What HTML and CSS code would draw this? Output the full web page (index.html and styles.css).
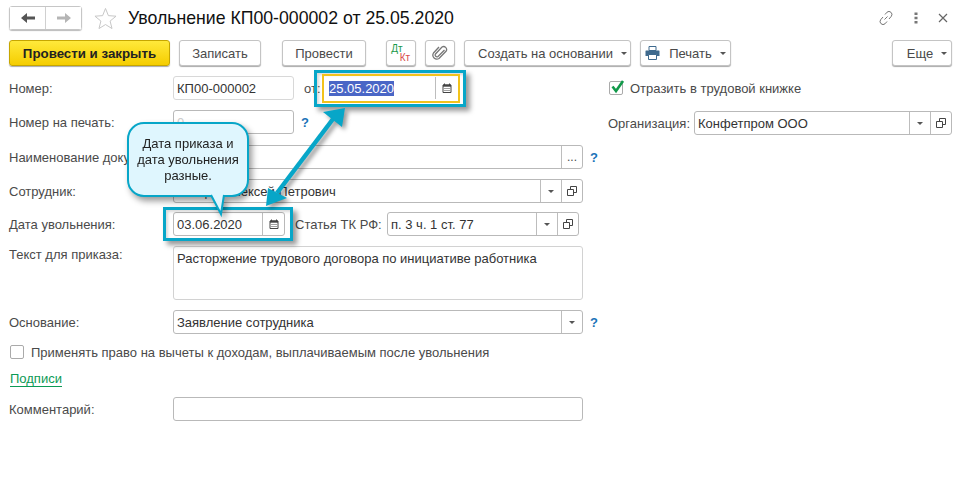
FILE: index.html
```html
<!DOCTYPE html>
<html lang="ru">
<head>
<meta charset="utf-8">
<title>Увольнение КП00-000002</title>
<link rel="stylesheet" href="styles.css">
</head>
<body>
<svg class="defs" width="0" height="0">
  <defs>
    <symbol id="cal" viewBox="0 0 10 10"><path d="M1 2h8v7.500H1z M2.500 .5v2 M7.500 .5v2" fill="none" stroke="#444" stroke-width="1"/><path d="M1 1.500h8v2.200H1z" fill="#444"/><path d="M2.500 5h1v1h-1zM4.500 5h1v1h-1zM6.500 5h1v1h-1zM2.500 7h1v1h-1zM4.500 7h1v1h-1zM6.500 7h1v1h-1z" fill="#444"/></symbol>
    <symbol id="open" viewBox="0 0 10 10"><path d="M3.500 3V.5h6v6H7M.5 3.500h6v6h-6z" fill="none" stroke="#444" stroke-width="1"/></symbol>
  </defs>
</svg>
<div class="page">
  <header class="head">
    <div class="nav">
      <button class="nav-btn"><svg width="16" height="12" viewBox="0 0 16 12"><path d="M1 6l6-5v3.500h8v3H7V11z" fill="#555"/></svg></button>
      <button class="nav-btn"><svg width="16" height="12" viewBox="0 0 16 12"><path d="M15 6L9 1v3.500H1v3h8V11z" fill="#b5b5b5"/></svg></button>
    </div>
    <svg class="star" width="23" height="23" viewBox="0 0 24 24"><path d="M12 1.500l3 7.500 8 .6-6.200 5.100 2 7.800L12 18.300l-6.800 4.200 2-7.800L1 9.600 9 9z" fill="#fff" stroke="#c4c4c4"/></svg>
    <h1 class="title">Увольнение КП00-000002 от 25.05.2020</h1>
    <div class="win-icons">
      <svg width="16" height="16" viewBox="0 0 16 16"><path d="M6.500 9.500l3-3M7 4.500l2-2.300a3 3 0 0 1 4.400 4L11 9M9 11.500l-2 2.300a3 3 0 0 1-4.400-4L5 7" fill="none" stroke="#777" stroke-width="1"/></svg>
      <svg width="4" height="12" viewBox="0 0 4 12"><path d="M.5 .5h3v2.500h-3zM.5 4.800h3v2.500h-3zM.5 9h3v2.500h-3z" fill="#777"/></svg>
      <svg width="10" height="10" viewBox="0 0 10 10"><path d="M1 1l8 8M9 1l-8 8" stroke="#666" stroke-width="1.200"/></svg>
    </div>
  </header>

  <div class="toolbar">
    <button class="btn primary w161">Провести и закрыть</button>
    <button class="btn w82">Записать</button>
    <button class="btn w84 gap-l">Провести</button>
    <button class="btn w30 gap-m dtkt"><span class="dt">Дт</span><span class="kt">Кт</span></button>
    <button class="btn w30"><svg width="16" height="16" viewBox="0 0 16 16"><path d="M12.500 5L6 11.500a1.800 1.800 0 0 1-2.500-2.500l6.500-7a3 3 0 0 1 4.200 4L7 13.500a4 4 0 0 1-5.500-5.500L7 2" fill="none" stroke="#777" stroke-width="1.300"/></svg></button>
    <button class="btn w167 shifted">Создать на основании<i class="caret"></i></button>
    <button class="btn w91"><svg class="printer" width="15" height="14" viewBox="0 0 15 14"><path d="M4 .5h7v4H4z" fill="#fff" stroke="#3f6a8e"/><path d="M1 4.500h13a.5.500 0 0 1 .5.500v5H.5V5a.5.500 0 0 1 .5-.500z" fill="#3f6a8e"/><path d="M3.500 8.500h8v5h-8z" fill="#fff" stroke="#3f6a8e"/></svg>Печать<i class="caret"></i></button>
    <button class="btn w60 push shifted">Еще<i class="caret"></i></button>
  </div>

  <main class="form">
    <div class="main-col">
      <div class="row r1">
        <label class="lbl">Номер:</label>
        <div class="field w121 soft"><span class="val">КП00-000002</span></div>
        <span class="lbl-in ot">от:</span>
        <div class="field w137 nob"><span class="val sel">25.05.2020</span><span class="fb cal"><svg width="10" height="10"><use href="#cal"/></svg></span></div>
      </div>
      <div class="row r2">
        <label class="lbl">Номер на печать:</label>
        <div class="field w121"><span class="val ph">0</span></div>
        <a class="q">?</a>
      </div>
      <div class="row r3">
        <label class="lbl">Наименование документа:</label>
        <div class="field w410"><span class="val"></span><span class="fb">...</span></div>
        <a class="q">?</a>
      </div>
      <div class="row r4">
        <label class="lbl">Сотрудник:</label>
        <div class="field w410"><span class="val">Зайцев Алексей Петрович</span><span class="fb"><i class="caret"></i></span><span class="fb"><svg width="10" height="10"><use href="#open"/></svg></span></div>
      </div>
      <div class="row r5">
        <label class="lbl">Дата увольнения:</label>
        <div class="field w112"><span class="val">03.06.2020</span><span class="fb cal"><svg width="10" height="10"><use href="#cal"/></svg></span></div>
        <span class="lbl-in st">Статья ТК РФ:</span>
        <div class="field w192"><span class="val">п. 3 ч. 1 ст. 77</span><span class="fb"><i class="caret"></i></span><span class="fb"><svg width="10" height="10"><use href="#open"/></svg></span></div>
      </div>
      <div class="row r6">
        <label class="lbl">Текст для приказа:</label>
        <div class="field w410 area"><span class="val">Расторжение трудового договора по инициативе работника</span></div>
      </div>
      <div class="row r7">
        <label class="lbl">Основание:</label>
        <div class="field w410"><span class="val">Заявление сотрудника</span><span class="fb"><i class="caret"></i></span></div>
        <a class="q">?</a>
      </div>
      <div class="check-row"><i class="box"></i><span class="lbl-in">Применять право на вычеты к доходам, выплачиваемым после увольнения</span></div>
      <a class="link">Подписи</a>
      <div class="row r8">
        <label class="lbl">Комментарий:</label>
        <div class="field w410"></div>
      </div>
    </div>
    <aside class="side-col">
      <div class="side-check"><i class="box on"><svg width="15" height="14" viewBox="0 0 15 14"><path d="M2.500 6.500l3.500 4.500L13 1" fill="none" stroke="#12994a" stroke-width="2.600"/></svg></i><span class="lbl-in">Отразить в трудовой книжке</span></div>
      <div class="side-org">
        <label class="lbl-in">Организация:</label>
        <div class="field w258"><span class="val">Конфетпром ООО</span><span class="fb"><i class="caret"></i></span><span class="fb"><svg width="10" height="10"><use href="#open"/></svg></span></div>
      </div>
    </aside>
  </main>

  <div class="frame f1"><div class="inner"></div></div>
  <div class="frame f2"></div>
  <svg class="arrow" width="100" height="115" viewBox="0 0 100 115"><path d="M22 93L78 19" stroke="#07a6c8" stroke-width="4.500"/><path d="M90 8L68 12 87 27zM11 106L13 88 32 98z" fill="#07a6c8"/></svg>
  <div class="callout">
    <svg class="tail" width="24" height="22" viewBox="0 0 24 22"><path d="M2 0L12 19 15 0" fill="#dff6fe" stroke="#07a6c8" stroke-width="2"/><path d="M4 0h10v-3H4z" fill="#dff6fe"/></svg>
    <p>Дата приказа и дата увольнения разные.</p>
  </div>
</div>
</body>
</html>
```
FILE: styles.css
```css
* { box-sizing: border-box; }
html, body { margin: 0; padding: 0; background: #fff; }
body { font-family: "Liberation Sans", Arial, sans-serif; font-size: 13px; color: #4a4a4a; }
.defs { position: absolute; }
.page { position: relative; width: 963px; height: 479px; overflow: hidden; padding: 6px 11px 0 9px; }

.head { display: flex; align-items: center; height: 24px; }
.nav { display: flex; width: 73px; height: 24px; border: 1px solid #c6c6c6; border-radius: 3px; box-shadow: 0 1px 1px #bbb; }
.nav-btn { flex: 1; border: 0; background: #fff; padding: 0; display: flex; align-items: center; justify-content: center; }
.nav-btn + .nav-btn { border-left: 1px solid #d0d0d0; }
.star { margin-left: 12px; }
.title { margin: 0 0 0 11px; font-size: 17.700px; font-weight: 400; color: #111; line-height: 24px; white-space: nowrap; }
.win-icons { margin-left: auto; margin-right: 4px; display: flex; align-items: center; gap: 20px; }

.toolbar { display: flex; margin-top: 10px; gap: 9px; height: 26px; }
.btn { font: inherit; font-size: 13px; color: #4a4a4a; height: 26px; padding: 0; background: #fff; border: 1px solid #c4c4c4; border-radius: 3px; box-shadow: 0 1px 1px #aaa; display: flex; align-items: center; justify-content: center; white-space: nowrap; }
.shifted { padding-left: 10px; }
.primary { background: linear-gradient(#ffe93b, #f5cd00); border-color: #c6a600; color: #222; font-weight: 700; font-size: 13.300px; }
.w161 { width: 161px; } .w82 { width: 82px; } .w84 { width: 84px; } .w30 { width: 30px; }
.w167 { width: 167px; } .w91 { width: 91px; } .w60 { width: 60px; }
.gap-l { margin-left: 12px; } .gap-m { margin-left: 11px; }
.push { margin-left: auto; }
.caret { display: inline-block; margin-left: 8px; width: 0; height: 0; border: 3px solid transparent; border-top: 3px solid #555; border-bottom: 0; }
.printer { margin-right: 9px; }
.dtkt { flex-direction: column; font-size: 10px; line-height: 9px; }
.dt { color: #1a9a4b; margin-right: 8px; }
.kt { color: #d84b4b; margin-left: 8px; }

.form { display: flex; margin-top: 10px; }
.main-col { width: 599px; flex: none; }
.row { display: flex; align-items: center; height: 24px; }
.r2 { margin-top: 10px; } .r3 { margin-top: 11px; } .r4 { margin-top: 10px; } .r5 { margin-top: 9px; }
.r6 { margin-top: 10px; height: 54px; align-items: flex-start; } .r7 { margin-top: 10px; } .r8 { margin-top: 10px; }
.lbl { width: 164px; flex: none; font-size: 13px; white-space: nowrap; }
.r6 .lbl { margin-top: 1px; }
.lbl-in { font-size: 13px; white-space: nowrap; }
.ot { margin-left: 10px; width: 19px; }
.st { margin-left: 10px; width: 92px; }
.field { height: 24px; display: flex; align-items: center; background: #fff; border: 1px solid #b9b9b9; border-radius: 3px; flex: none; }
.soft { border-color: #d8d8d8; }
.nob { border-color: transparent; }
.area { height: 54px; align-items: flex-start; border-color: #d2d2d2; padding-top: 4px; }
.w121 { width: 121px; } .w137 { width: 137px; } .w410 { width: 410px; } .w112 { width: 112px; } .w192 { width: 192px; } .w258 { width: 258px; }
.val { flex: 1; padding-left: 3px; font-size: 13px; color: #333; white-space: nowrap; overflow: hidden; }
.sel { flex: none; width: 65px; padding: 0; margin-left: 5px; margin-right: 41px; background: #4a66c6; color: #fff; }
.ph { color: #ccc; }
.fb { flex: none; width: 21px; height: 22px; border-left: 1px solid #bdbdbd; display: flex; align-items: center; justify-content: center; font-size: 12px; line-height: 18px; }
.fb.cal { width: 22px; }
.fb .caret { margin-left: 0; }
.q { margin-left: 7px; color: #1b73b8; font-weight: 700; font-size: 13px; }

.check-row { display: flex; align-items: center; gap: 7px; height: 16px; margin-top: 10px; margin-left: 1px; }
.box { display: block; width: 14px; height: 14px; border: 1px solid #aaa; border-radius: 2px; flex: none; position: relative; }
.on svg { position: absolute; left: 0; top: -2px; }
.link { display: table; margin-top: 12px; color: #0c9a55; font-size: 13px; line-height: 14px; border-bottom: 1px solid #0c9a55; margin-left: 1px; }

.side-col { flex: 1; }
.side-check { display: flex; align-items: center; gap: 7px; height: 24px; margin-left: 1px; }
.side-org { display: flex; align-items: center; justify-content: space-between; margin-top: 11px; height: 24px; }

.frame { position: absolute; border: 3px solid #07a6c8; box-shadow: 4px 4px 5px rgba(0,0,0,.4), inset 2px 2px 3px rgba(0,0,0,.15); }
.f1 { left: 314px; top: 70px; width: 152px; height: 37px; padding: 1px 3px 1px 5px; }
.f1 .inner { width: 100%; height: 100%; border: 2px solid #f2c31b; }
.f2 { left: 163px; top: 207px; width: 130px; height: 34px; }
.arrow { position: absolute; left: 255px; top: 100px; filter: drop-shadow(3px 3px 2px rgba(0,0,0,.4)); }
.callout { position: absolute; left: 127px; top: 122px; width: 122px; height: 75px; background: #dff6fe; border: 2px solid #07a6c8; border-radius: 17px; display: flex; align-items: center; justify-content: center; filter: drop-shadow(3px 4px 3px rgba(0,0,0,.4)); }
.callout p { margin: 0; padding: 0 6px; font-size: 13px; line-height: 16px; text-align: center; color: #222; }
.tail { position: absolute; left: 80px; top: 71px; overflow: visible; }
```
